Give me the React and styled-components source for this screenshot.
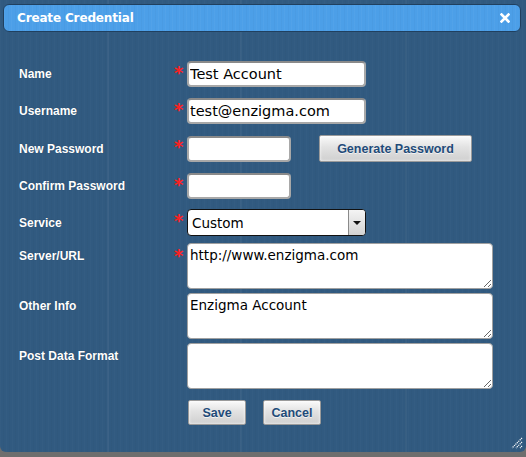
import React from "react";
import styled, { createGlobalStyle } from "styled-components";

const GlobalStyle = createGlobalStyle`
  html, body {
    margin: 0;
    padding: 0;
    background: #6e6e6e;
  }
`;

const Dialog = styled.div`
  position: relative;
  width: 526px;
  height: 452px;
  box-sizing: border-box;
  padding: 4px 5px 0 3px;
  border-radius: 0 0 6px 6px;
  background-color: #315a80;
  background-image:
    repeating-linear-gradient(90deg, rgba(255,255,255,0.015) 0 1px, transparent 1px 3px, rgba(0,0,0,0.02) 3px 4px, transparent 4px 6px),
    linear-gradient(90deg, transparent 107px, rgba(255,255,255,0.04) 107px 109px, transparent 109px 240px, rgba(255,255,255,0.035) 240px 242px, transparent 242px 405px, rgba(255,255,255,0.035) 405px 407px, transparent 407px);
  font-family: "Liberation Sans", Arial, sans-serif;
`;

const TitleBar = styled.div`
  display: flex;
  align-items: center;
  justify-content: space-between;
  height: 28px;
  box-sizing: border-box;
  padding: 0 10px 0 13px;
  border: 1px solid #20405f;
  border-radius: 6px;
  background-color: #4c9fe8;
  background-image:
    repeating-linear-gradient(90deg, rgba(255,255,255,0.03) 0 1px, transparent 1px 4px, rgba(0,0,0,0.025) 4px 5px, transparent 5px 7px);
  color: #fff;
`;

const Title = styled.span`
  font-family: "DejaVu Sans", Verdana, sans-serif;
  font-weight: bold;
  font-size: 12px;
  letter-spacing: -0.15px;
`;

const Close = styled.svg`
  width: 10px;
  height: 10px;
  display: block;
`;

const Form = styled.div`
  display: flex;
  flex-direction: column;
  padding: 29px 0 0 16px;
`;

const Row = styled.div`
  display: grid;
  grid-template-columns: 155px 13px auto;
  align-items: ${(p) => (p.$top ? "start" : "center")};
  margin-top: ${(p) => p.$space || 0}px;
`;

const Label = styled.label`
  color: #fff;
  font-weight: bold;
  font-size: 12px;
  text-shadow: 0 0 1px rgba(0, 0, 0, 0.3);
  padding-top: ${(p) => (p.$top ? "6px" : "0")};
`;

const Star = styled.span`
  color: #ff2020;
  font-family: "DejaVu Sans", sans-serif;
  font-weight: bold;
  font-size: 18px;
  line-height: 1;
  align-self: start;
  margin-top: ${(p) => p.$offset || 3}px;
`;

const Field = styled.div`
  display: flex;
  align-items: center;
`;

const TextInput = styled.input`
  box-sizing: border-box;
  width: ${(p) => p.$width}px;
  height: 26px;
  padding: 0 1px;
  border: 2px solid #a8a8a8;
  border-top-color: #8a8a8a;
  border-radius: 4px;
  background: #fff;
  font-family: "DejaVu Sans", Verdana, sans-serif;
  font-size: 14.5px;
  color: #000;
  outline: none;
`;

const Area = styled.textarea`
  box-sizing: border-box;
  width: 306px;
  height: 46px;
  padding: 3px 2px;
  border: 1px solid #a0a0a0;
  border-radius: 4px;
  background: #fff;
  font-family: "DejaVu Sans", Verdana, sans-serif;
  font-size: 13.5px;
  color: #000;
  outline: none;
  display: block;
`;

const SelectWrap = styled.div`
  position: relative;
  width: 179px;
  height: 27px;
`;

const Select = styled.select`
  appearance: none;
  box-sizing: border-box;
  width: 100%;
  height: 100%;
  padding: 0 20px 0 4px;
  border: 1px solid #111;
  border-radius: 4px;
  background: #fff;
  font-family: "DejaVu Sans", Verdana, sans-serif;
  font-size: 13.5px;
  color: #000;
  outline: none;
`;

const Arrow = styled.span`
  position: absolute;
  top: 1px;
  right: 1px;
  bottom: 1px;
  width: 16px;
  display: flex;
  align-items: center;
  justify-content: center;
  border-left: 1px solid #8a8a8a;
  border-radius: 0 3px 3px 0;
  background: linear-gradient(#f4f4f4, #d2d2d2);
  pointer-events: none;
  &::after {
    content: "";
    border-left: 4px solid transparent;
    border-right: 4px solid transparent;
    border-top: 4px solid #111;
  }
`;

const Button = styled.button`
  box-sizing: border-box;
  width: ${(p) => p.$width}px;
  height: ${(p) => p.$height || 25}px;
  margin-left: ${(p) => p.$ml || 0}px;
  border: 1px solid #9a9a9a;
  border-radius: 2px;
  background: linear-gradient(#fafafa 0%, #e2e2e2 45%, #cfcfcf 100%);
  box-shadow: inset 0 0 3px rgba(255, 255, 255, 0.9);
  color: #1f4b79;
  font-family: "Liberation Sans", Arial, sans-serif;
  font-weight: bold;
  font-size: 12.5px;
  text-shadow: 0 1px 0 rgba(255, 255, 255, 0.7);
  padding: 0;
  cursor: pointer;
`;

const Actions = styled.div`
  display: flex;
  gap: 17px;
  margin: 11px 0 0 169px;
`;

const Grip = styled.svg`
  position: absolute;
  right: 3px;
  bottom: 3px;
  width: 13px;
  height: 13px;
`;

export default function App() {
  return (
    <>
      <GlobalStyle />
      <Dialog>
        <TitleBar>
          <Title>Create Credential</Title>
          <Close viewBox="0 0 10 10">
            <path d="M1.5 1.5 L8.5 8.5 M8.5 1.5 L1.5 8.5" stroke="#fff" strokeWidth="2.6" strokeLinecap="square" />
          </Close>
        </TitleBar>
        <Form>
          <Row>
            <Label>Name</Label>
            <Star>*</Star>
            <Field><TextInput $width={179} defaultValue="Test Account" /></Field>
          </Row>
          <Row $space={11}>
            <Label>Username</Label>
            <Star>*</Star>
            <Field><TextInput $width={179} defaultValue="test@enzigma.com" /></Field>
          </Row>
          <Row $space={11}>
            <Label>New Password</Label>
            <Star>*</Star>
            <Field>
              <TextInput $width={104} type="password" />
              <Button $width={153} $height={27} $ml={28}>Generate Password</Button>
            </Field>
          </Row>
          <Row $space={11}>
            <Label>Confirm Password</Label>
            <Star>*</Star>
            <Field><TextInput $width={104} type="password" /></Field>
          </Row>
          <Row $space={10}>
            <Label>Service</Label>
            <Star>*</Star>
            <SelectWrap>
              <Select defaultValue="Custom">
                <option>Custom</option>
              </Select>
              <Arrow />
            </SelectWrap>
          </Row>
          <Row $space={7} $top>
            <Label $top>Server/URL</Label>
            <Star $offset={4}>*</Star>
            <Area defaultValue="http://www.enzigma.com" />
          </Row>
          <Row $space={4} $top>
            <Label $top>Other Info</Label>
            <span />
            <Area defaultValue="Enzigma Account" />
          </Row>
          <Row $space={4} $top>
            <Label $top>Post Data Format</Label>
            <span />
            <Area />
          </Row>
          <Actions>
            <Button $width={58}>Save</Button>
            <Button $width={58}>Cancel</Button>
          </Actions>
        </Form>
        <Grip viewBox="0 0 13 13">
          <path d="M12 2 L2 12 M12 6 L6 12 M12 10 L10 12" stroke="#fff" strokeWidth="1.2" strokeDasharray="1.2 0.8" />
        </Grip>
      </Dialog>
    </>
  );
}
